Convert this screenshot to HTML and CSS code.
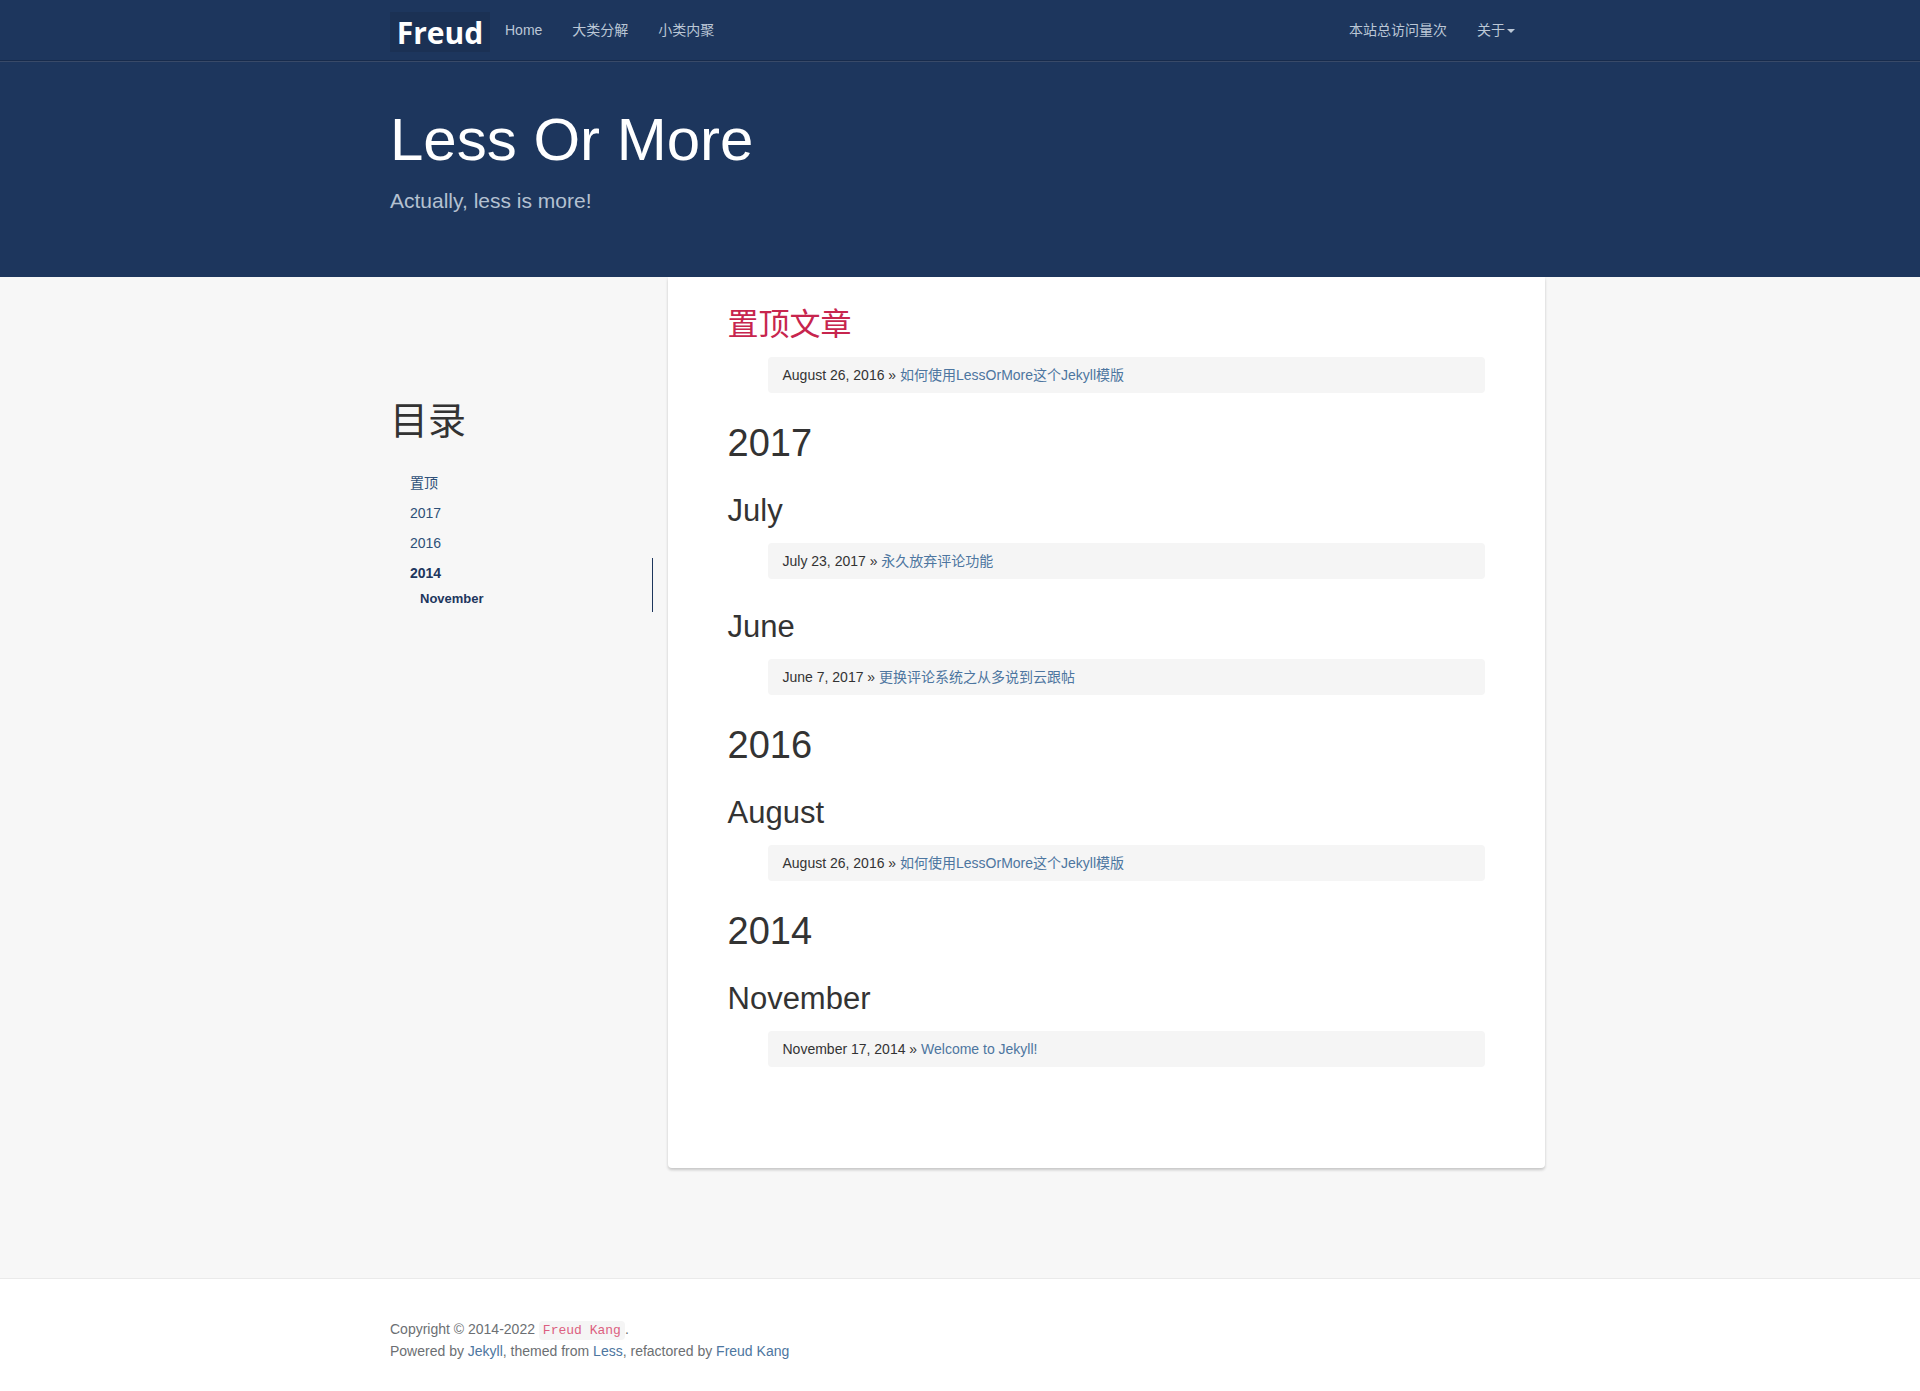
FILE: index.html
```html
<!DOCTYPE html>
<html lang="zh-CN">
<head>
  <meta charset="utf-8">
  <meta name="viewport" content="width=device-width, initial-scale=1">
  <title>Less Or More</title>
  <link rel="stylesheet" href="styles.css">
</head>
<body>
<nav class="navbar">
  <div class="container navbar-inner">
    <a class="logo" href="#">Freud</a>
    <ul class="nav">
      <li><a href="#">Home</a></li>
      <li><a href="#">大类分解</a></li>
      <li><a href="#">小类内聚</a></li>
    </ul>
    <ul class="nav nav-right">
      <li><a href="#">本站总访问量次</a></li>
      <li><a href="#">关于<span class="caret"></span></a></li>
    </ul>
  </div>
</nav>

<header class="masthead">
  <div class="container">
    <h1>Less Or More</h1>
    <p>Actually, less is more!</p>
  </div>
</header>

<div class="container main">
  <aside class="sidebar">
    <h1>目录</h1>
    <ul class="toc">
      <li><a href="#pinned">置顶</a></li>
      <li><a href="#y2017">2017</a></li>
      <li><a href="#y2016">2016</a></li>
      <li class="active">
        <a href="#y2014">2014</a>
        <ul>
          <li><a href="#november">November</a></li>
        </ul>
      </li>
    </ul>
  </aside>

  <main class="card">
    <h2 class="pinned" id="pinned">置顶文章</h2>
    <div class="post">August 26, 2016 » <a href="#">如何使用LessOrMore这个Jekyll模版</a></div>

    <h1 id="y2017">2017</h1>
    <h2>July</h2>
    <div class="post">July 23, 2017 » <a href="#">永久放弃评论功能</a></div>
    <h2>June</h2>
    <div class="post">June 7, 2017 » <a href="#">更换评论系统之从多说到云跟帖</a></div>

    <h1 id="y2016">2016</h1>
    <h2>August</h2>
    <div class="post">August 26, 2016 » <a href="#">如何使用LessOrMore这个Jekyll模版</a></div>

    <h1 id="y2014">2014</h1>
    <h2 id="november">November</h2>
    <div class="post">November 17, 2014 » <a href="#">Welcome to Jekyll!</a></div>
  </main>
</div>

<footer class="footer">
  <div class="container">
    <div>Copyright © 2014-2022 <code>Freud Kang</code>.</div>
    <div>Powered by <a href="#">Jekyll</a>, themed from <a href="#">Less</a>, refactored by <a href="#">Freud Kang</a></div>
  </div>
</footer>
</body>
</html>
```
FILE: styles.css
```css
* {
    box-sizing: border-box;
}

body {
    margin: 0;
    font: 14px/20px "Liberation Sans", Arial, "Noto Sans CJK SC", sans-serif;
    color: #333;
    background-color: #f7f7f7;
}

a {
    color: #4d76a0;
    text-decoration: none;
}

ul {
    margin: 0;
    padding: 0;
    list-style: none;
}

h1,
h2 {
    font-weight: normal;
}

.container {
    max-width: 1170px;
    margin: 0 auto;
    padding: 0 15px;
}

/* navbar */
.navbar {
    background-color: #1d365d;
    border-bottom: 1px solid #394a68;
    box-shadow: inset 0 -1px #172b4c;
}

.navbar-inner {
    display: flex;
    align-items: flex-start;
    height: 61px;
}

.logo {
    width: 100px;
    height: 40px;
    margin-top: 12px;
    font: bold 30px/42px "Open Sans", sans-serif;
    text-align: center;
    color: #fff;
    background-color: #1b3154;
}

.nav {
    display: flex;
}

.nav a {
    display: block;
    padding: 20px 15px;
    color: #bbc7d6;
}

.nav-right {
    margin-left: auto;
}

.caret {
    display: inline-block;
    margin-left: 2px;
    vertical-align: middle;
    border-top: 4px solid;
    border-left: 4px solid transparent;
    border-right: 4px solid transparent;
}

/* masthead */
.masthead {
    padding: 45px 0 61px;
    color: #fff;
    background-color: #1d365d;
}

.masthead h1 {
    margin: 0;
    font-size: 60px;
    line-height: 66px;
}

.masthead p {
    margin: 12px 0 0;
    font-size: 21px;
    line-height: 31px;
    color: #b4c1d1;
}

/* content */
.main {
    display: flex;
    padding: 0;
}

.sidebar {
    width: 25%;
    padding: 123px 15px 0;
}

.sidebar h1 {
    margin: 0 0 26px;
    font-size: 38px;
    line-height: 42px;
}

.toc a {
    display: block;
    padding: 5px 20px;
    color: #2e5078;
}

.toc .active {
    border-right: 1px solid #1d365d;
    padding-bottom: 2px;
}

.toc .active a {
    font-weight: bold;
    color: #1d365d;
}

.toc ul a {
    padding: 1px 30px;
    font-size: 13px;
}

.card {
    display: flow-root;
    flex: 1;
    margin-bottom: 110px;
    padding: 0 60px 81px;
    background-color: #fff;
    border-radius: 0 0 4px 4px;
    box-shadow: 0 2px 3px rgba(0, 0, 0, 0.2);
}

.card h1 {
    margin: 30px 0;
    font-size: 38px;
    line-height: 40px;
}

.card h2 {
    margin: 31px 0 15px;
    font-size: 31px;
    line-height: 34px;
}

.card .pinned {
    color: #c7254e;
}

.post {
    margin: 0 0 20px 40px;
    padding: 8px 15px;
    background-color: #f5f5f5;
    border-radius: 4px;
}

/* footer */
.footer {
    padding: 39px 0 30px;
    line-height: 22px;
    color: #6c6f73;
    background-color: #fff;
    border-top: 1px solid #eaeaea;
}

code {
    padding: 2px 4px;
    font-family: "Courier New", "Liberation Mono", monospace;
    font-size: 13px;
    line-height: 1;
    color: #dc5f80;
    background-color: #f5f5f5;
    border-radius: 4px;
}
```
